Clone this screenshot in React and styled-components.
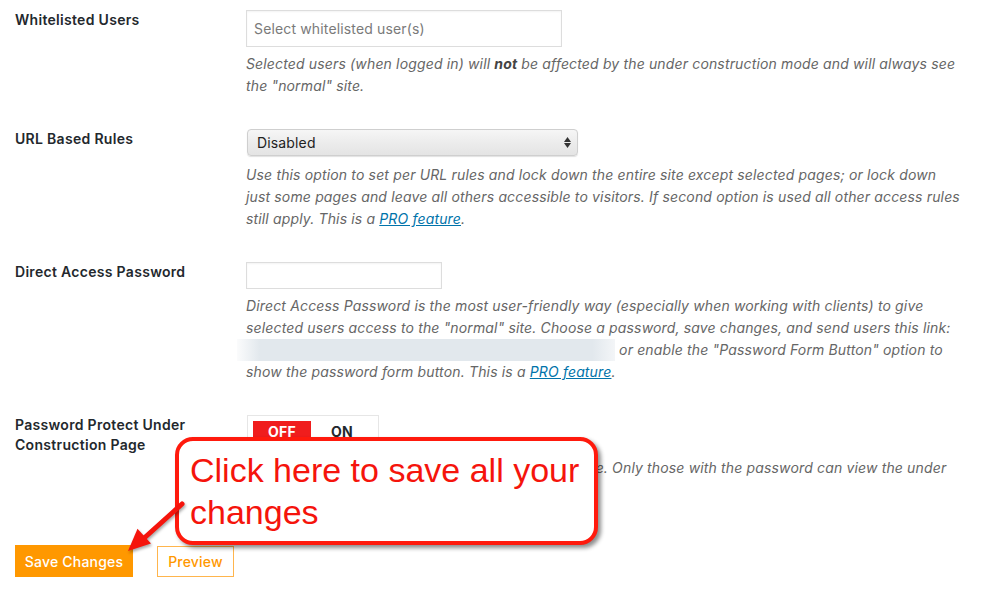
import styled, { createGlobalStyle } from 'styled-components';

const GlobalStyle = createGlobalStyle`
  html, body {
    margin: 0;
    padding: 0;
    background: #fff;
  }
  body {
    font-family: Inter, "Noto Sans", "Liberation Sans", sans-serif;
    color: #23282d;
    font-size: 14px;
  }
`;

const Page = styled.div`
  position: relative;
  width: 1000px;
  height: 594px;
  overflow: hidden;
  padding: 10px 0 0 15px;
  box-sizing: border-box;
`;

const Row = styled.div`
  display: grid;
  grid-template-columns: 231px 715px;
  margin-bottom: ${(p) => (p.$last ? '0' : '32px')};
`;

const Label = styled.div`
  font-weight: 600;
  font-size: 14px;
  line-height: 20px;
  letter-spacing: 0.3px;
  color: #23282d;
`;

const Field = styled.div`
  display: flex;
  flex-direction: column;
  align-items: flex-start;
`;

const TextInput = styled.div`
  box-sizing: border-box;
  width: ${(p) => p.$width}px;
  height: ${(p) => p.$height}px;
  border: 1px solid #dddddd;
  box-shadow: inset 0 1px 2px rgba(0, 0, 0, 0.05);
  background: #fff;
  display: flex;
  align-items: center;
  padding: 0 7px;
  color: #7a7a7a;
  font-size: 14px;
  letter-spacing: 0.15px;
`;

const Select = styled.div`
  box-sizing: border-box;
  width: 331px;
  height: 27px;
  margin-left: 1px;
  margin-bottom: 2px;
  border: 1px solid #cfcfcf;
  border-radius: 4px;
  background: linear-gradient(#f6f6f6, #ececec 50%, #e4e4e4);
  box-shadow: 0 1px 1px rgba(0, 0, 0, 0.12);
  display: flex;
  align-items: center;
  justify-content: space-between;
  padding: 0 6px 0 9px;
  color: #222;
  font-size: 14px;
  letter-spacing: 0.15px;
`;

const Arrows = styled.span`
  display: flex;
  flex-direction: column;
  align-items: center;
  gap: 1px;
`;

const Desc = styled.p`
  margin: 6px 0 0;
  font-style: italic;
  font-size: 14px;
  line-height: 22px;
  letter-spacing: 0.15px;
  color: #666;

  strong {
    color: #444;
    font-weight: 700;
  }

  a {
    color: #0073aa;
    text-decoration: underline;
  }
`;

const Redacted = styled.span`
  display: inline-block;
  width: 378px;
  height: 22px;
  margin-left: -9px;
  vertical-align: bottom;
  background: linear-gradient(
    to right,
    rgba(226, 231, 236, 0.15),
    #e2e8ed 6%,
    #e2e8ed 94%,
    rgba(226, 231, 236, 0.4)
  );
`;

const Toggle = styled.div`
  box-sizing: border-box;
  display: flex;
  margin-left: 1px;
  width: 132px;
  height: 36px;
  padding: 5px;
  border: 1px solid #e6e6e6;
`;

const ToggleOption = styled.span`
  display: flex;
  align-items: center;
  justify-content: center;
  width: ${(p) => (p.$active ? '58px' : '62px')};
  background: ${(p) => (p.$active ? '#f01d1d' : 'transparent')};
  color: ${(p) => (p.$active ? '#fff' : '#23282d')};
  font-weight: 700;
  font-size: 14px;
  letter-spacing: 0.3px;
  padding-bottom: 4px;
`;

const Submit = styled.div`
  display: flex;
  gap: 24px;
  margin-top: 44px;
`;

const Button = styled.button`
  box-sizing: border-box;
  padding: 0;
  white-space: nowrap;
  font-family: Inter, "Noto Sans", sans-serif;
  font-size: 14px;
  font-weight: 500;
  letter-spacing: 0.2px;
  border-radius: 0;
  cursor: pointer;
  background: ${(p) => (p.$primary ? '#ff9800' : '#fff')};
  color: ${(p) => (p.$primary ? '#fff' : '#ff9800')};
  border: ${(p) => (p.$primary ? 'none' : '1px solid #ffb54d')};
  width: ${(p) => (p.$primary ? '118px' : '77px')};
  margin-top: ${(p) => (p.$primary ? '0' : '1px')};
  height: ${(p) => (p.$primary ? '32px' : '31px')};
`;

const Callout = styled.div`
  position: absolute;
  left: 175px;
  top: 437px;
  width: 423px;
  height: 108px;
  box-sizing: border-box;
  border: 4px solid #ff1a0d;
  border-radius: 18px;
  background: #fff;
  box-shadow: 3px 3px 4px rgba(0, 0, 0, 0.45);
  padding: 8px 11px;
  font-family: "Liberation Sans", Arial, sans-serif;
  font-size: 34px;
  line-height: 42px;
  color: #f5140c;
  white-space: nowrap;
  z-index: 2;
`;

const Pointer = styled.svg`
  position: absolute;
  left: 100px;
  top: 480px;
  z-index: 3;
  overflow: visible;
  filter: drop-shadow(1px 2px 1.5px rgba(0, 0, 0, 0.35));
`;

export default function App() {
  return (
    <>
      <GlobalStyle />
      <Page>
        <Row>
          <Label>Whitelisted Users</Label>
          <Field>
            <TextInput $width={316} $height={37}>Select whitelisted user(s)</TextInput>
            <Desc>
              Selected users (when logged in) will <strong>not</strong> be affected by the under
              construction mode and will always see the "normal" site.
            </Desc>
          </Field>
        </Row>

        <Row>
          <Label>URL Based Rules</Label>
          <Field>
            <Select>
              Disabled
              <Arrows>
                <svg width="7" height="5" viewBox="0 0 7 5">
                  <path d="M3.5 0 L7 5 L0 5 Z" fill="#333" />
                </svg>
                <svg width="7" height="5" viewBox="0 0 7 5">
                  <path d="M0 0 L7 0 L3.5 5 Z" fill="#333" />
                </svg>
              </Arrows>
            </Select>
            <Desc>
              Use this option to set per URL rules and lock down the entire site except selected
              pages; or lock down just some pages and leave all others accessible to visitors. If
              second option is used all other access rules still apply. This is a{' '}
              <a href="#pro">PRO feature</a>.
            </Desc>
          </Field>
        </Row>

        <Row>
          <Label>Direct Access Password</Label>
          <Field>
            <TextInput $width={196} $height={27} />
            <Desc>
              Direct Access Password is the most user-friendly way (especially when working with
              clients) to give selected users access to the "normal" site. Choose a password, save
              changes, and send users this link: <Redacted /> or enable the "Password Form Button"
              option to show the password form button. This is a <a href="#pro">PRO feature</a>.
            </Desc>
          </Field>
        </Row>

        <Row $last>
          <Label>
            Password Protect Under
            <br />
            Construction Page
          </Label>
          <Field>
            <Toggle>
              <ToggleOption $active>OFF</ToggleOption>
              <ToggleOption>ON</ToggleOption>
            </Toggle>
            <Desc>
              Protect this whole page with a password you choose. Only those with the password can
              view the under
              <br />
              construction page.
            </Desc>
          </Field>
        </Row>

        <Submit>
          <Button $primary>Save Changes</Button>
          <Button>Preview</Button>
        </Submit>

        <Callout>
          Click here to save all your
          <br />
          changes
        </Callout>

        <Pointer width="100" height="90" viewBox="0 0 100 90">
          <line x1="82" y1="24" x2="42" y2="60" stroke="#f5140c" strokeWidth="5" strokeLinecap="round" />
          <path d="M28 71 L37.5 48.8 L51 63.6 Z" fill="#f5140c" />
        </Pointer>
      </Page>
    </>
  );
}
